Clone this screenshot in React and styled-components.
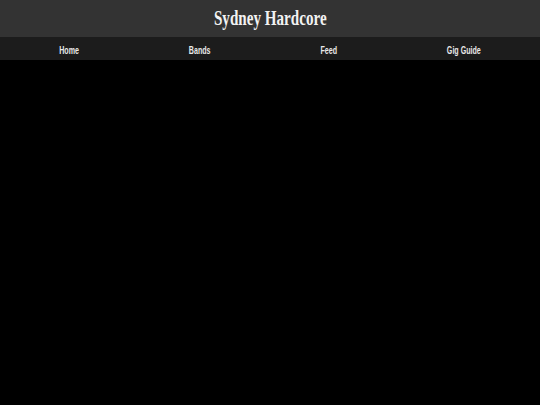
import styled, { createGlobalStyle } from 'styled-components';

const GlobalStyle = createGlobalStyle`
  html, body {
    margin: 0;
    padding: 0;
    background: #000;
  }
  body {
    font-family: 'Liberation Sans', Arial, sans-serif;
  }
`;

// the type is set narrow, as if squeezed sideways
const SQUEEZE = 0.71;

const Page = styled.div`
  min-height: 405px;
  background: #000;
`;

const Header = styled.header`
  height: 37px;
  background: #333;
  display: flex;
  align-items: center;
  justify-content: center;
`;

const Title = styled.h1`
  margin: 0;
  font-family: 'Liberation Serif', 'Times New Roman', serif;
  font-weight: 700;
  font-size: 21px;
  line-height: 1;
  color: #f2f2f2;
  transform: scaleX(0.72);
`;

const Nav = styled.nav`
  height: 23px;
  background: #1c1c1c;
  overflow: hidden;
`;

const NavList = styled.ul`
  margin: 0;
  padding: 0 6px;
  list-style: none;
  box-sizing: border-box;
  width: calc(100% / ${SQUEEZE});
  height: 100%;
  display: flex;
  align-items: center;
  justify-content: space-around;
  transform: scaleX(${SQUEEZE});
  transform-origin: 0 0;
`;

const NavLink = styled.a`
  color: #e8e8e8;
  font-size: 10px;
  font-weight: 700;
  text-decoration: none;
`;

const links = ['Home', 'Bands', 'Feed', 'Gig Guide'];

const App = () => {
  return (
    <Page>
      <GlobalStyle />
      <Header>
        <Title>Sydney Hardcore</Title>
      </Header>
      <Nav>
        <NavList>
          {links.map((l) => (
            <li key={l}>
              <NavLink href="#">{l}</NavLink>
            </li>
          ))}
        </NavList>
      </Nav>
    </Page>
  );
};

export default App;
